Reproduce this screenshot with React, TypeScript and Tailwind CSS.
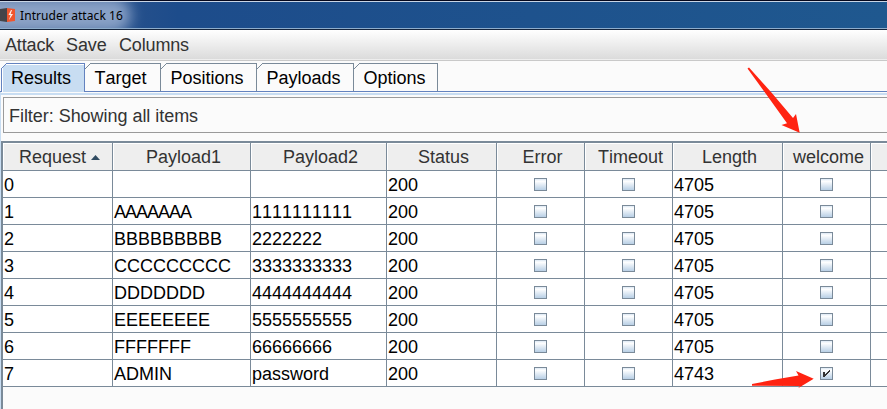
import React from "react";

const cols = "grid grid-cols-[110px_138px_136px_110px_88px_88px_110px_88px_16px]";
const headers = ["Request", "Payload1", "Payload2", "Status", "Error", "Timeout", "Length", "welcome", ""];

const rows = [
  ["0", "", "", "200", "4705"],
  ["1", "AAAAAAA", "1111111111", "200", "4705"],
  ["2", "BBBBBBBBB", "2222222", "200", "4705"],
  ["3", "CCCCCCCCC", "3333333333", "200", "4705"],
  ["4", "DDDDDDD", "4444444444", "200", "4705"],
  ["5", "EEEEEEEE", "5555555555", "200", "4705"],
  ["6", "FFFFFFF", "66666666", "200", "4705"],
  ["7", "ADMIN", "password", "200", "4743"],
];

const tabs = [
  { label: "Target", width: "w-[76px]" },
  { label: "Positions", width: "w-[96px]" },
  { label: "Payloads", width: "w-[97px]" },
  { label: "Options", width: "w-[84px]" },
];

function TextCell({ children, tight = false }: { children?: React.ReactNode; tight?: boolean }) {
  return (
    <div
      className={`h-[27px] border-r border-b border-[#7a8a99] pl-px leading-[28px] ${tight ? "tracking-[-1px]" : ""}`}
    >
      {children}
    </div>
  );
}

function CheckCell({ checked = false }: { checked?: boolean }) {
  return (
    <div className="flex h-[27px] items-center justify-center border-r border-b border-[#7a8a99] pr-px">
      <div className="h-[13px] w-[13px] border border-[#7a8a99] bg-linear-to-b from-[#dce8f4] via-white via-20% to-[#b8cfe5]">
        {checked && (
          <svg width="11" height="11" viewBox="0 0 11 11" shapeRendering="crispEdges">
            <path d="M2 4h2v5h-2zM8 2h1v2h-1zM7 3h1v2h-1zM6 4h1v2h-1zM5 5h1v2h-1zM4 6h1v2h-1z" fill="#333" />
          </svg>
        )}
      </div>
    </div>
  );
}

function TabCorner() {
  return (
    <svg className="absolute -top-px left-0" width="6" height="6" viewBox="0 0 6 6" shapeRendering="crispEdges">
      <path d="M0 0h6L0 6z" fill="#fbfbfb" />
      <path d="M5 0h1v1h-1zM4 1h1v1h-1zM3 2h1v1h-1zM2 3h1v1h-1zM1 4h1v1h-1zM0 5h1v1h-1z" fill="#7a8a99" />
    </svg>
  );
}

export default function App() {
  return (
    <div className="relative flex h-[409px] w-[887px] flex-col overflow-hidden bg-[#fbfbfb] font-['Liberation_Sans',Arial,sans-serif] text-[18px] whitespace-nowrap text-black [font-kerning:none]">
      <div className="relative flex h-[30px] items-center overflow-hidden border-t border-b border-t-[#05071c] border-b-[#15253d] bg-linear-to-r from-[#3a5a8c] via-[#1d4c8b] via-20% to-[#1f588f]">
        <div className="absolute -top-1 -left-6 h-9 w-[155px] rounded-full bg-[#a9bcda] opacity-75 blur-[7px]" />
        <div className="absolute inset-0 border-t border-b border-t-[#c9d5e5] border-b-[#8eadcc]" />
        <svg className="relative" width="16" height="16" viewBox="0 0 16 16">
          <path d="M0 2L7 1v14L0 14z" fill="#454449" />
          <path d="M7 1l8 1v12l-8 1z" fill="#f0562e" />
          <path d="M11 3L8.5 8h2L9 13l4-6h-2.4L12 3z" fill="#fff0e9" />
        </svg>
        <span className="relative mt-0.5 ml-1 font-['Noto_Sans',sans-serif] text-[12px] leading-[20px] tracking-[0.08px]">
          Intruder attack 16
        </span>
      </div>
      <div className="flex h-[31px] items-center border-b border-[#c9c9c9] bg-linear-to-b from-white to-[#dadada] pl-[5px] text-[#333] shadow-[inset_0_-1px_0_#eee]">
        <span className="w-[61px] tracking-[-0.15px]">Attack</span>
        <span className="w-[53px] tracking-[-0.1px]">Save</span>
        <span className="tracking-[-0.15px]">Columns</span>
      </div>
      <div className="mt-0.5 flex h-[29px] items-end border-b border-[#6382bf] pl-px leading-[28px]">
        <div className="relative -mb-px h-[29px] w-[84px] border-t border-r border-l border-[#6382bf] bg-[#c8ddf2] pl-[9px] shadow-[inset_1px_1px_0_white]">
          <svg className="absolute -top-px -left-px" width="6" height="6" viewBox="0 0 6 6" shapeRendering="crispEdges">
            <path d="M0 0h6L0 6z" fill="#fbfbfb" />
            <path d="M5 0h1v1h-1zM4 1h1v1h-1zM3 2h1v1h-1zM2 3h1v1h-1zM1 4h1v1h-1zM0 5h1v1h-1z" fill="#6382bf" />
          </svg>
          Results
        </div>
        {tabs.map((tab) => (
          <div key={tab.label} className={`relative h-[28px] border-t border-r border-[#7a8a99] pl-[9.5px] ${tab.width}`}>
            <TabCorner />
            {tab.label}
          </div>
        ))}
      </div>
      <div className="flex flex-1 flex-col border-l border-[#c8ddf2]">
        <div className="mt-px h-0.5 bg-[#c8ddf2]" />
        <div className="mt-0.5 ml-0.5 h-9 border-t border-b border-l border-[#9a9a9a] pl-[5px] leading-[37px] tracking-[-0.04px] text-[#333]">
          Filter: Showing all items
        </div>
        <div className="mt-2 flex-1 border-t-2 border-l-2 border-[#7a8a99]">
          <div className={cols}>
            {headers.map((h, i) => (
              <div
                key={i}
                className="flex h-7 items-center justify-center border-r border-b border-[#7a8a99] bg-[#eee] pt-0.5 pl-1 text-[#333] shadow-[inset_1px_1px_0_white] last:border-r-0"
              >
                {h}
                {i === 0 && (
                  <svg className="ml-[5px]" width="9" height="5" viewBox="0 0 9 5">
                    <path d="M4.5 0L9 5H0z" fill="#304b61" />
                  </svg>
                )}
              </div>
            ))}
          </div>
          <div className="bg-white">
            {rows.map(([id, p1, p2, status, length]) => (
              <div key={id} className={cols}>
                <TextCell>{id}</TextCell>
                <TextCell tight={id === "1"}>{p1}</TextCell>
                <TextCell>{p2}</TextCell>
                <TextCell>{status}</TextCell>
                <CheckCell />
                <CheckCell />
                <TextCell>{length}</TextCell>
                <CheckCell checked={id === "7"} />
                <div className="border-b border-[#7a8a99]" />
              </div>
            ))}
          </div>
        </div>
      </div>
      <svg className="pointer-events-none absolute inset-0" width="887" height="409" viewBox="0 0 887 409">
        <path d="M747.5 68.5L749 67.5L771 92L793 118L796 114L799.7 132.7L781.5 125L787 123.3L766 94z" fill="#ff2311" />
        <path d="M752 384L775 379.5L798.5 375.5L796 371L813.7 378.7L798 388.3L800 386L752 385.7z" fill="#ff2311" />
      </svg>
    </div>
  );
}
